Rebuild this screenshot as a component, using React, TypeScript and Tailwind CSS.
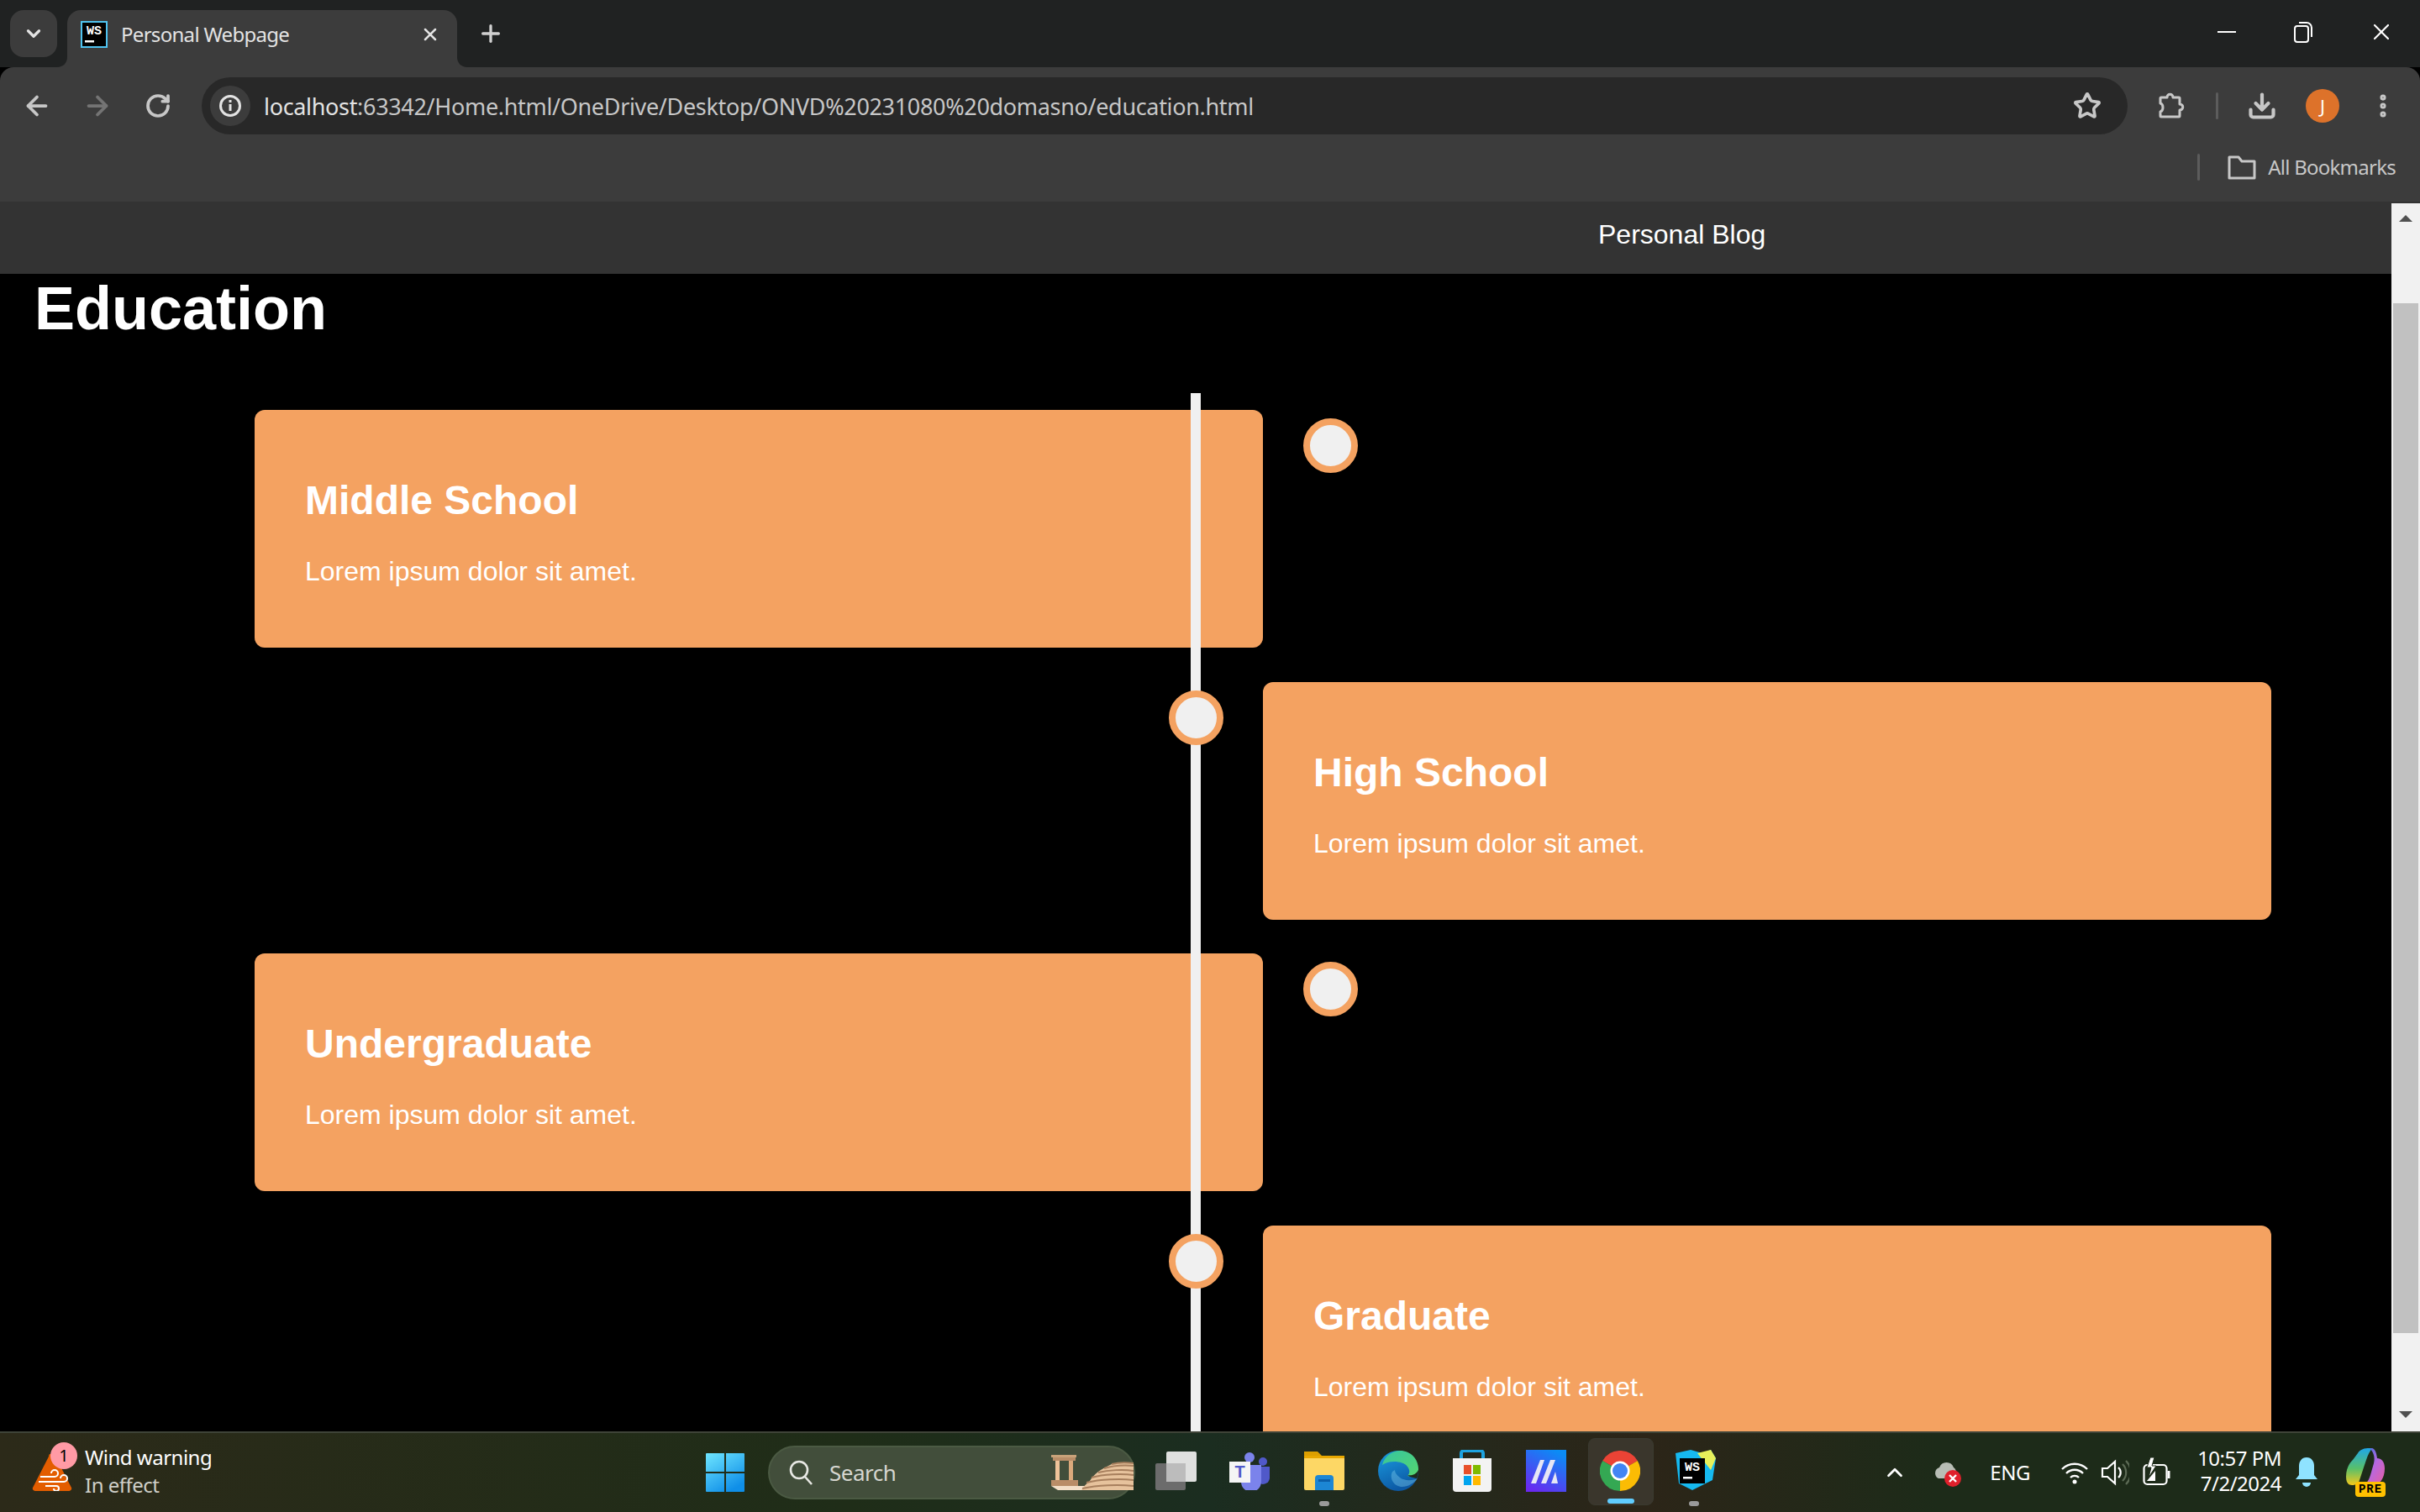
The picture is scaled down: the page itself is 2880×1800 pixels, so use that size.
import React from 'react';
import { ArrowLeft, ArrowRight, ChevronDown, ChevronUp, Download, EllipsisVertical, Plus, RotateCw, Star, X } from 'lucide-react';

const stages = [
  { title: 'Middle School', side: 'left' },
  { title: 'High School', side: 'right' },
  { title: 'Undergraduate', side: 'left' },
  { title: 'Graduate', side: 'right' },
];

const WsLogo = ({ size, border }: { size: number; border?: boolean }) => (
  <svg width={size} height={size} viewBox="0 0 32 32">
    <rect x="1" y="1" width="30" height="30" fill="#000" stroke={border ? '#4fc3f0' : 'none'} strokeWidth="2" />
    <text x="16" y="16" textAnchor="middle" fontSize="15" fontWeight="700" fill="#fff" fontFamily="Liberation Mono, monospace">WS</text>
    <rect x="5" y="23" width="11" height="2.5" fill="#fff" />
  </svg>
);

const TabCorner = ({ flip }: { flip?: boolean }) => (
  <svg width="12" height="12" viewBox="0 0 12 12" className={flip ? 'absolute bottom-0 left-full' : 'absolute bottom-0 right-full'}>
    <path d={flip ? 'M0 0C0 7 5 12 12 12H0Z' : 'M12 0C12 7 7 12 0 12H12Z'} fill="#3c3c3c" />
  </svg>
);

const ExtensionIcon = () => (
  <svg width="36" height="36" viewBox="0 0 36 36" fill="none" stroke="#c7c7c7" strokeWidth="3" strokeLinejoin="round">
    <path d="M6 8h7c0-5 7-5 7 0h7a1 1 0 0 1 1 1v7c5 0 5 7 0 7v7a1 1 0 0 1-1 1H6a1 1 0 0 1-1-1v-5c4-1 4-9 0-10V9a1 1 0 0 1 1-1z" />
  </svg>
);

const FolderIcon = () => (
  <svg width="34" height="32" viewBox="0 0 34 32" fill="none" stroke="#c7c7c7" strokeWidth="3" strokeLinejoin="round">
    <path d="M2 4h11l4 5h15v20H2z" />
  </svg>
);

const WindowsLogo = () => (
  <svg width="46" height="46" viewBox="0 0 46 46">
    <defs>
      <linearGradient id="win" x1="0" y1="0" x2="0.6" y2="1">
        <stop offset="0" stopColor="#6fe6ff" />
        <stop offset="1" stopColor="#0f8fe8" />
      </linearGradient>
    </defs>
    <path d="M0 1a1 1 0 0 1 1-1h21v22H0zM24 0h21a1 1 0 0 1 1 1v21H24zM0 24h22v22H1a1 1 0 0 1-1-1zM24 24h22v21a1 1 0 0 1-1 1H24z" fill="url(#win)" />
  </svg>
);

const SearchArt = () => (
  <svg width="98" height="42" viewBox="0 0 98 42">
    <rect x="0" y="0" width="30" height="3" fill="#c9a27a" />
    <rect x="2" y="3" width="27" height="4" fill="#b98d68" />
    <rect x="5" y="7" width="5" height="25" fill="#eec39a" />
    <rect x="21" y="7" width="5" height="25" fill="#dba97c" />
    <rect x="0" y="30" width="32" height="7" fill="#b98d68" />
    <path d="M0 37h44v5H8z" fill="#f3dfc8" />
    <path d="M72 11c8-2 17-2 26-2v33H36c2-4 6-8 10-11 2-4 6-8 10-11 4-3 10-6 16-9z" fill="#e6c29c" />
    <path d="M72 11c8-2 17-2 26-1M63 16c10-3 24-4 35-3M56 21c12-3 30-4 42-2M48 27c14-4 36-5 50-3M42 33c16-4 40-5 56-3M37 40c18-4 43-5 61-3" stroke="#a77f5d" strokeWidth="2" fill="none" />
  </svg>
);

const TaskView = () => (
  <svg width="50" height="46" viewBox="0 0 50 46">
    <rect x="0" y="14" width="36" height="32" rx="2" fill="#6c6c6c" />
    <rect x="13" y="0" width="36" height="36" rx="2" fill="#f0f0f0" fillOpacity="0.92" />
    <rect x="13" y="14" width="23" height="22" fill="#bcbcbc" />
  </svg>
);

const TeamsLogo = () => (
  <svg width="50" height="46" viewBox="0 0 50 46">
    <circle cx="24" cy="7" r="6" fill="#7b83eb" />
    <circle cx="40" cy="12" r="5" fill="#5059c9" />
    <path d="M34 18h14v14a8 8 0 0 1-14 4z" fill="#5059c9" />
    <path d="M14 16h24v20a12 12 0 0 1-24 0z" fill="#7b83eb" />
    <rect x="0" y="12" width="25" height="25" fill="#f5f5f5" />
    <text x="12.5" y="31" textAnchor="middle" fontSize="20" fontWeight="700" fill="#5059c9" fontFamily="Liberation Sans, sans-serif">T</text>
  </svg>
);

const ExplorerLogo = () => (
  <svg width="50" height="46" viewBox="0 0 50 46">
    <path d="M1 0h16l5 5h-21z" fill="#dc9f00" />
    <rect x="1" y="5" width="48" height="8" fill="#e8a800" />
    <path d="M1 8h48v36a2 2 0 0 1-2 2H3a2 2 0 0 1-2-2z" fill="#fdd765" />
    <path d="M14 46V32a4 4 0 0 1 4-4h14a4 4 0 0 1 4 4v14z" fill="#1c86d4" />
    <rect x="18" y="33" width="14" height="3" fill="#0b5ea8" />
  </svg>
);

const EdgeLogo = () => (
  <svg width="50" height="50" viewBox="0 0 50 50">
    <defs>
      <linearGradient id="edgeA" x1="0" y1="0" x2="1" y2="1">
        <stop offset="0" stopColor="#36c5a0" />
        <stop offset="1" stopColor="#56d66f" />
      </linearGradient>
      <linearGradient id="edgeB" x1="0" y1="0" x2="0.4" y2="1">
        <stop offset="0" stopColor="#1b9de2" />
        <stop offset="1" stopColor="#0c59a4" />
      </linearGradient>
    </defs>
    <circle cx="25" cy="25" r="24" fill="url(#edgeB)" />
    <path d="M6 18C9 6 20 1 27 1c13 0 22 10 22 22 0 8-8 10-13 8 3-3 3-7 0-11-5-7-22-8-30-2z" fill="url(#edgeA)" />
    <path d="M18 26c-4 8 2 18 12 18 6 0 14-4 18-10-6 3-16 3-21-1-4-3-6-6-6-9z" fill="#8fdcf5" fillOpacity="0.35" />
    <path d="M36 30c4 1 10 0 13-6 0 4-1 7-2 10-3-1-8-1-11-4z" fill="#1f2a1c" />
  </svg>
);

const StoreLogo = () => (
  <svg width="46" height="50" viewBox="0 0 46 50">
    <path d="M10 12V4a3 3 0 0 1 3-3h20a3 3 0 0 1 3 3v8" fill="none" stroke="#1ea3e0" strokeWidth="4" />
    <path d="M0 10h46v36a4 4 0 0 1-4 4H4a4 4 0 0 1-4-4z" fill="#f3f3f3" />
    <rect x="13" y="18" width="9" height="11" fill="#e8502a" />
    <rect x="24" y="18" width="9" height="11" fill="#7fba00" />
    <rect x="13" y="31" width="9" height="11" fill="#00a4ef" />
    <rect x="24" y="31" width="9" height="11" fill="#ffb900" />
  </svg>
);

const StudioLogo = () => (
  <svg width="48" height="50" viewBox="0 0 48 50">
    <defs>
      <linearGradient id="studio" x1="0.7" y1="0" x2="0.2" y2="1">
        <stop offset="0" stopColor="#0b8cf5" />
        <stop offset="1" stopColor="#6a28f0" />
      </linearGradient>
    </defs>
    <rect width="48" height="50" fill="url(#studio)" />
    <path d="M6 40L17 12h5L12 40zM18 40L29 12h6l-11 28zM30 40l5-14 3 14z" fill="#e6e6f5" />
  </svg>
);

const ChromeLogo = () => (
  <svg width="48" height="48" viewBox="0 0 48 48">
    <path d="M24 24L3.2 12A24 24 0 0 1 44.8 12z" fill="#ea4335" />
    <path d="M24 24L44.8 12A24 24 0 0 1 24 48z" fill="#fbbc04" />
    <path d="M24 24L24 48A24 24 0 0 1 3.2 12z" fill="#34a853" />
    <circle cx="24" cy="24" r="11.5" fill="#fff" />
    <circle cx="24" cy="24" r="9" fill="#4285f4" />
  </svg>
);

const WebStormLogo = () => (
  <svg width="52" height="50" viewBox="0 0 52 50">
    <path d="M4 4l18-4 14 4 10-4 6 10-4 26-24 12-16-8z" fill="#16b9f0" />
    <path d="M30 4l16-4 6 10-6 14z" fill="#e7f05a" />
    <rect x="9" y="10" width="30" height="30" fill="#000" />
    <text x="24" y="25" textAnchor="middle" fontSize="15" fontWeight="700" fill="#fff" fontFamily="Liberation Mono, monospace">WS</text>
    <rect x="13" y="32" width="11" height="2.5" fill="#fff" />
  </svg>
);

const TaskIcon = ({ children, dot, active }: { children: React.ReactNode; dot?: boolean; active?: boolean }) => (
  <div className="relative flex h-full w-[88px] shrink-0 items-center justify-center">
    {active && <div className="absolute top-[6px] left-[6px] h-[80px] w-[78px] rounded-lg border border-[#3a3a30] bg-[#3a362c]" />}
    <div className="relative -mt-1">{children}</div>
    {dot && <div className="absolute top-[81px] left-[38px] h-[6px] w-[12px] rounded-full bg-[#9a9a9a]" />}
    {active && <div className="absolute top-[78px] left-[29px] h-[6px] w-[32px] rounded-full bg-[#60cdff]" />}
  </div>
);

const CopilotLogo = () => (
  <div className="relative h-[58px] w-[48px]">
    <svg width="46" height="48" viewBox="0 0 46 48">
      <defs>
        <linearGradient id="copL" x1="0" y1="0" x2="0" y2="1">
          <stop offset="0" stopColor="#1fa6e8" />
          <stop offset="0.55" stopColor="#58c06a" />
          <stop offset="1" stopColor="#f4c81c" />
        </linearGradient>
        <linearGradient id="copR" x1="0" y1="0" x2="1" y2="1">
          <stop offset="0" stopColor="#2b6fe0" />
          <stop offset="0.5" stopColor="#b768e0" />
          <stop offset="1" stopColor="#e85fa0" />
        </linearGradient>
      </defs>
      <path d="M14 6C17 1 22 0 28 0h4c-4 3-6 8-8 14l-8 24c-1 4-5 6-9 6C2 44 0 40 0 34c0-10 4-16 8-20z" fill="url(#copL)" />
      <path d="M28 0h2c4 0 6 4 7 12 5 0 9 4 9 12 0 12-6 20-14 20H20c5-2 7-6 9-12l4-14c2-8-1-14-5-18z" fill="url(#copR)" />
    </svg>
    <div className="absolute top-[40px] left-[11px] flex h-[18px] w-[36px] items-center justify-center rounded-[4px] bg-[#ffc000] text-[14px] leading-none font-bold tracking-[1px] text-black [font-family:'Liberation_Mono',monospace]">
      PRE
    </div>
  </div>
);

const Stage = ({ title, side }: { title: string; side: string }) => (
  <div className={`relative h-[283px] w-[1200px] rounded-xl bg-[#f4a261] px-[60px] pt-[80px] text-white ${side === 'right' ? 'ml-[1200px]' : ''}`}>
    <h2 className="text-[48px] leading-[56px] font-bold">{title}</h2>
    <p className="mt-[38px] text-[32px] leading-[37px]">Lorem ipsum dolor sit amet.</p>
    <div className={`absolute top-[10px] h-[65px] w-[65px] rounded-full border-[8px] border-[#f4a261] bg-[#f0f0f0] ${side === 'right' ? 'left-[-112.5px] z-10' : 'right-[-113px]'}`} />
  </div>
);

export default function App() {
  return (
    <div className="flex h-[1800px] w-[2880px] flex-col overflow-hidden bg-black [font-family:'Liberation_Sans',Arial,sans-serif]">
      {/* Browser chrome */}
      <div className="flex h-[80px] shrink-0 items-end bg-[#202222] pl-[12px] text-[#e3e3e3] [font-family:'Noto_Sans',sans-serif]">
        <div className="mb-[12px] flex h-[56px] w-[56px] items-center justify-center rounded-2xl bg-[#3c3c3c]">
          <ChevronDown size={26} strokeWidth={3} />
        </div>
        <div className="relative ml-[12px] flex h-[68px] w-[464px] items-center rounded-t-2xl bg-[#3c3c3c] pb-[10px] pl-[16px]">
          <TabCorner />
          <TabCorner flip />
          <WsLogo size={32} border />
          <span className="ml-[16px] text-[24px] leading-none tracking-[-0.7px]">Personal Webpage</span>
          <X size={24} strokeWidth={2.5} className="ml-auto mr-[20px]" />
        </div>
        <div className="mb-[26px] ml-[24px] flex h-[28px] items-center">
          <Plus size={32} strokeWidth={2.5} className="text-[#d0d0d0]" />
        </div>
        <div className="mb-[26px] ml-auto flex items-center text-white">
          <div className="h-[2px] w-[22px] bg-white" />
          <svg width="24" height="28" viewBox="0 0 24 28" fill="none" stroke="#fff" strokeWidth="2" className="ml-[68px]">
            <rect x="2" y="7" width="16" height="19" rx="3" />
            <path d="M7 3h9a6 6 0 0 1 6 6v11" />
          </svg>
          <X size={32} strokeWidth={1.6} className="ml-[65px] mr-[30px]" />
        </div>
      </div>

      <div className="flex h-[160px] shrink-0 flex-col rounded-t-2xl bg-[#3c3c3c] text-[#c7c7c7]">
        <div className="mt-[12px] flex h-[68px] items-center pl-[26px]">
          <ArrowLeft size={36} strokeWidth={2.5} />
          <ArrowRight size={36} strokeWidth={2.5} className="ml-[36px] text-[#747474]" />
          <RotateCw size={32} strokeWidth={2.8} className="ml-[38px]" />
          <div className="ml-[36px] flex h-[68px] w-[2292px] items-center rounded-full bg-[#282828] pl-[10px]">
            <div className="flex h-[48px] w-[48px] items-center justify-center rounded-full bg-[#3c3c3c]">
              <svg width="28" height="28" viewBox="0 0 28 28" fill="none" stroke="#e3e3e3" strokeWidth="3">
                <circle cx="14" cy="14" r="11.5" />
                <path d="M14 12v8M14 7v3" />
              </svg>
            </div>
            <span className="ml-[16px] text-[27px] leading-none tracking-[-0.33px] text-[#e3e3e3] [font-family:'Noto_Sans',sans-serif]">
              localhost<span className="text-[#c7c7c7]">:63342/Home.html/OneDrive/Desktop/ONVD%20231080%20domasno/education.html</span>
            </span>
            <Star size={34} strokeWidth={2.6} className="ml-auto mr-[31px]" />
          </div>
          <div className="ml-[34px]"><ExtensionIcon /></div>
          <div className="ml-[35px] h-[32px] w-[3px] rounded bg-[#5c5c5c]" />
          <Download size={36} strokeWidth={2.8} className="ml-[34px]" />
          <div className="ml-[34px] flex h-[40px] w-[40px] items-center justify-center rounded-full bg-[#dd722a] text-[22px] leading-none text-white [font-family:'Noto_Sans',sans-serif]">J</div>
          <EllipsisVertical size={34} strokeWidth={3} className="ml-[35px]" />
        </div>
        <div className="mt-[19px] flex h-[40px] items-center justify-end pr-[29px]">
          <div className="h-[32px] w-[3px] rounded bg-[#5c5c5c]" />
          <div className="ml-[33px]"><FolderIcon /></div>
          <span className="ml-[14px] text-[24px] leading-none tracking-[-0.75px] [font-family:'Noto_Sans',sans-serif]">All Bookmarks</span>
        </div>
      </div>
      <div className="h-[2px] shrink-0 bg-[#333]" />

      {/* Page */}
      <div className="flex h-[1462px] shrink-0">
        <div className="h-full w-[2846px] overflow-hidden">
          <nav className="flex h-[84px] items-center bg-[#333] pb-[10px] pl-[1902px] text-[32px] leading-none text-white">Personal Blog</nav>
          <h1 className="h-[142px] pl-[41px] text-[72px] leading-[83px] font-bold text-white">Education</h1>
          <div className="relative ml-[303px] flex w-[2400px] flex-col gap-[40.5px] pt-[20px]">
            {stages.map((s) => (
              <Stage key={s.title} title={s.title} side={s.side} />
            ))}
            <div className="absolute top-0 left-[1114px] h-[1400px] w-[12px] bg-[#f0f0f0]" />
          </div>
        </div>
        <div className="flex h-full w-[34px] flex-col items-center bg-[#f1f1f1]">
          <svg width="16" height="8" viewBox="0 0 16 8" className="mt-[14px]"><path d="M8 0l8 8H0z" fill="#505050" /></svg>
          <div className="mt-[97px] h-[1226px] w-[30px] bg-[#c1c1c1]" />
          <svg width="16" height="8" viewBox="0 0 16 8" className="mt-[93px]"><path d="M8 8L0 0h16z" fill="#505050" /></svg>
        </div>
      </div>

      {/* Taskbar */}
      <div className="flex h-[96px] shrink-0 items-center border-t-2 border-[#3f4438] bg-[linear-gradient(90deg,#2c2a19_0%,#1f2d18_35%,#1b2d20_50%,#2c2518_68%,#1d2b19_80%)] text-white [font-family:'Noto_Sans',sans-serif]">
        <div className="flex w-[840px] shrink-0 items-center pl-[38px]">
          <div className="relative h-[44px] w-[48px]">
            <svg width="48" height="44" viewBox="0 0 48 44">
              <path d="M20 3a4 4 0 0 1 8 0l19 37a3 3 0 0 1-3 4H4a3 3 0 0 1-3-4z" fill="#e35d00" />
              <path d="M10 27h17a4 4 0 1 0-4-4M8 33h30a4 4 0 1 0-4-4M16 38h13a3 3 0 1 1-3 3" fill="none" stroke="#fff" strokeWidth="2" />
            </svg>
            <div className="absolute top-[-14px] left-[22px] flex h-[32px] w-[32px] items-center justify-center rounded-full bg-[#ff9aa5] text-[20px] leading-none text-black">1</div>
          </div>
          <div className="ml-[15px] flex -translate-y-[2px] flex-col gap-[7px]">
            <span className="text-[24px] leading-[26px] tracking-[-0.5px]">Wind warning</span>
            <span className="text-[24px] leading-[26px] tracking-[-0.5px] text-[#cfcfc8]">In effect</span>
          </div>
        </div>
        <WindowsLogo />
        <div className="ml-[28px] flex h-[64px] w-[437px] shrink-0 items-center rounded-full border-2 border-[#4b5a43] bg-[#424e3b] pl-[22px] text-[#d6d6d0]">
          <svg width="32" height="32" viewBox="0 0 32 32" fill="none" stroke="#e8e8e4" strokeWidth="2.6">
            <circle cx="13" cy="13" r="10" />
            <path d="M20 21l8 9" />
          </svg>
          <span className="ml-[17px] text-[26px] leading-none tracking-[-0.5px]">Search</span>
          <div className="ml-auto"><SearchArt /></div>
        </div>
        <div className="ml-[5px] flex h-full">
          <TaskIcon><TaskView /></TaskIcon>
          <TaskIcon><TeamsLogo /></TaskIcon>
          <TaskIcon dot><ExplorerLogo /></TaskIcon>
          <TaskIcon><EdgeLogo /></TaskIcon>
          <TaskIcon><StoreLogo /></TaskIcon>
          <TaskIcon><StudioLogo /></TaskIcon>
          <TaskIcon active><ChromeLogo /></TaskIcon>
          <TaskIcon dot><WebStormLogo /></TaskIcon>
        </div>
        <div className="ml-auto flex items-center pr-[40px]">
          <ChevronUp size={30} strokeWidth={2.2} />
          <svg width="34" height="34" viewBox="0 0 34 34" className="ml-[31px]">
            <path d="M6 24a7 7 0 0 1 1-13 9 9 0 0 1 17 0 6 6 0 0 1 2 8l-4 5z" fill="#b8bdb5" />
            <circle cx="23" cy="24" r="10" fill="#e0202c" />
            <path d="M19 20l8 8M27 20l-8 8" stroke="#fff" strokeWidth="2.4" />
          </svg>
          <span className="ml-[33px] text-[24px] leading-none tracking-[-0.4px]">ENG</span>
          <svg width="32" height="30" viewBox="0 0 32 30" fill="none" stroke="#fff" strokeWidth="2.4" className="ml-[37px]">
            <path d="M1 11a21 21 0 0 1 30 0M6 16a14 14 0 0 1 20 0M11 21a7 7 0 0 1 10 0" />
            <circle cx="16" cy="26" r="2.5" fill="#fff" stroke="none" />
          </svg>
          <svg width="34" height="34" viewBox="0 0 34 34" fill="none" stroke="#fff" strokeWidth="2.2" className="ml-[15px]">
            <path d="M2 12h6l9-8v26l-9-8H2z" />
            <path d="M21 11a8 8 0 0 1 0 12" />
            <path d="M26 7a14 14 0 0 1 0 20M30 3a20 20 0 0 1 0 28" stroke="#5c6a55" />
          </svg>
          <svg width="34" height="36" viewBox="0 0 34 36" fill="none" stroke="#fff" strokeWidth="2.2" className="ml-[16px]">
            <rect x="1.5" y="9" width="27" height="23" rx="4" />
            <path d="M31 16v9" strokeWidth="3" />
            <path d="M9 0L5 12h5l-3 12 9-14h-5l3-10z" fill="#fff" stroke="#1d2b19" strokeWidth="1" />
            <path d="M5 28l10-12v12z" fill="#fff" stroke="none" />
          </svg>
          <div className="ml-[31px] flex -translate-y-[2px] flex-col items-end gap-[4px]">
            <span className="text-[24px] leading-[26px] tracking-[-0.5px]">10:57 PM</span>
            <span className="text-[24px] leading-[26px] tracking-[-0.5px]">7/2/2024</span>
          </div>
          <svg width="28" height="38" viewBox="0 0 28 38" className="ml-[16px]">
            <path d="M14 1c6 0 9 5 9 10v11l4 5H1l4-5V11C5 6 8 1 14 1z" fill="#8fe3ff" />
            <path d="M9 31h10a5 5 0 0 1-10 0z" fill="#8fe3ff" />
          </svg>
          <div className="ml-[33px]"><CopilotLogo /></div>
        </div>
      </div>
    </div>
  );
}
